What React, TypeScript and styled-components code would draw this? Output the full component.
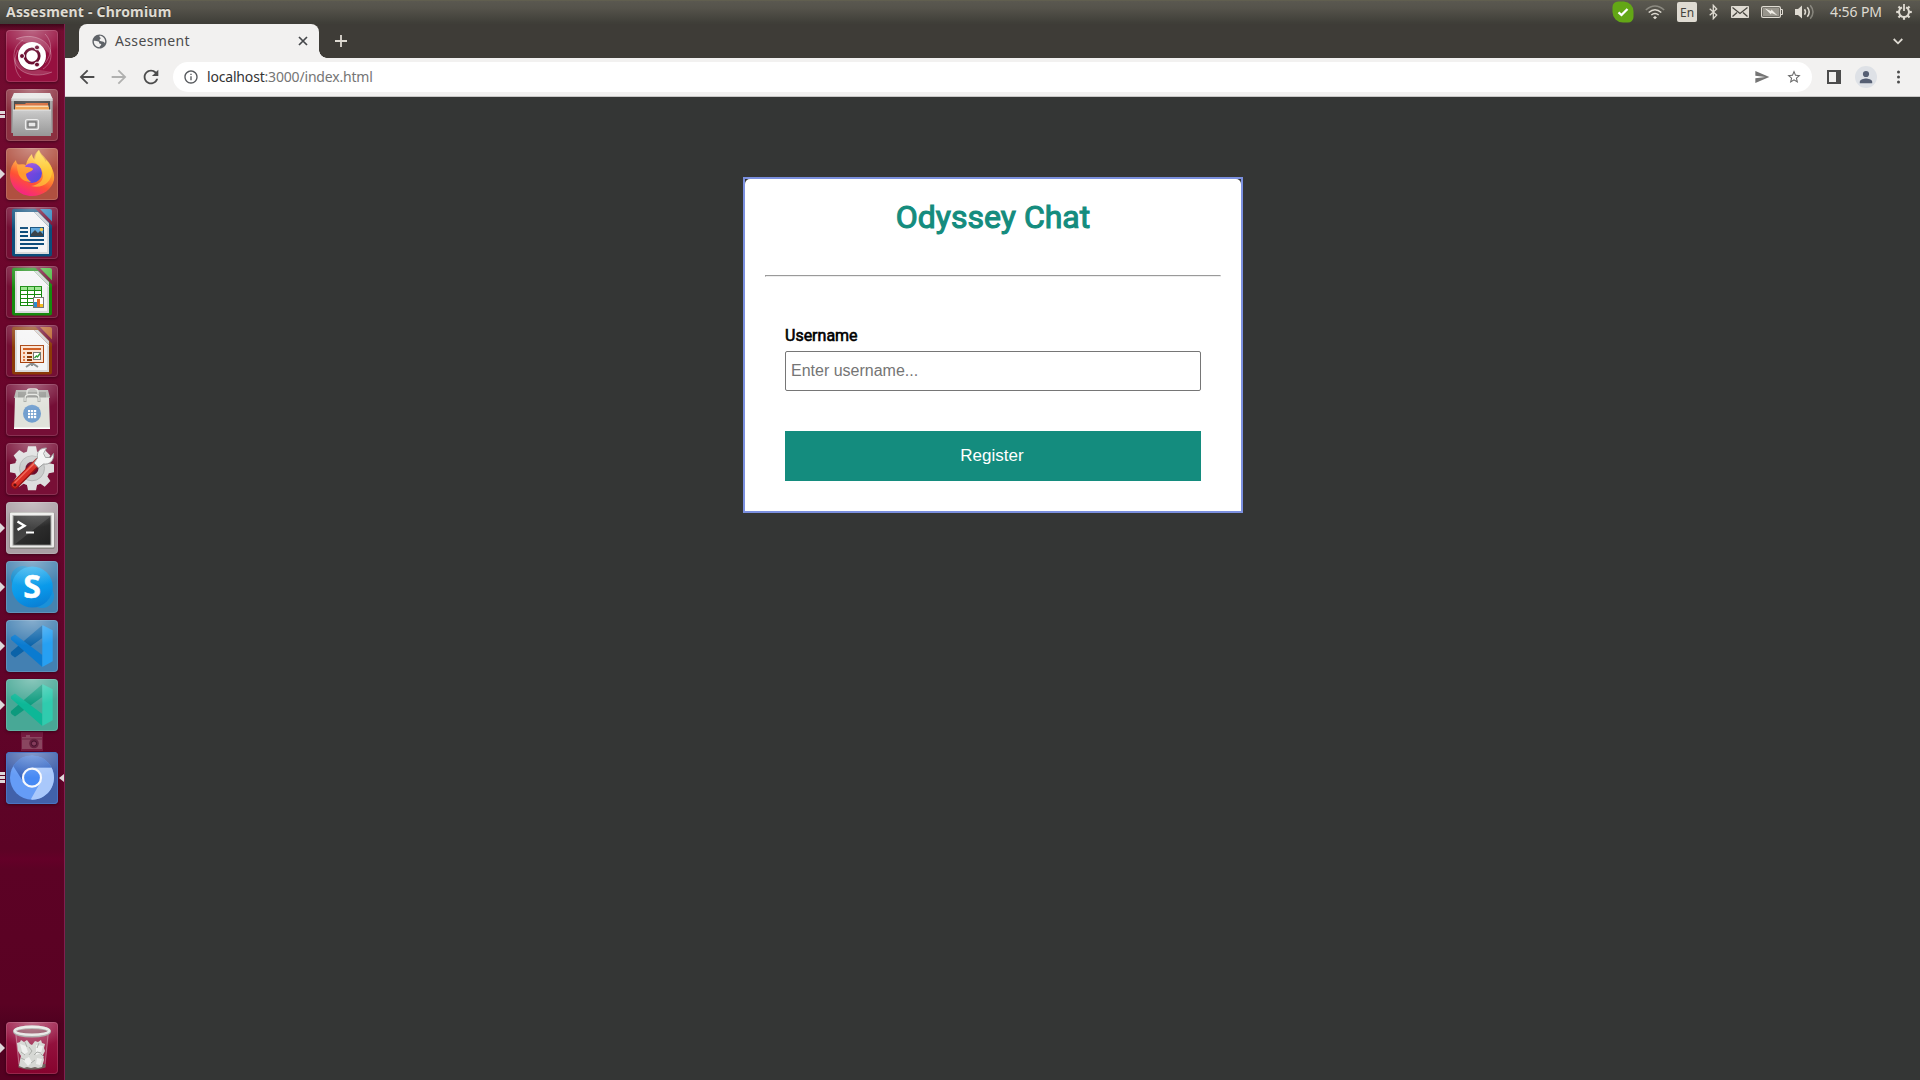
import React from "react";
import styled, { createGlobalStyle } from "styled-components";

const UI = `"Noto Sans", "Open Sans", sans-serif`;

const GlobalStyle = createGlobalStyle`
  *, *::before, *::after { box-sizing: border-box; }
  body { margin: 0; background: #343635; overflow: hidden; }
  svg { display: block; }
`;

const Desktop = styled.div`
  display: flex;
  flex-direction: column;
  width: 1920px;
  height: 1080px;
  background: #343635;
  font-family: ${UI};
`;

/* ---------- top panel ---------- */

const TopPanel = styled.header`
  display: flex;
  align-items: center;
  justify-content: space-between;
  flex: none;
  height: 24px;
  padding: 0 8px 0 6px;
  color: #dfdbd2;
  background: linear-gradient(#68664f 0, #5a5850 1px, #55534b 8px, #3f3e38 23px);
`;

const WindowTitle = styled.div`
  font-size: 14px;
  font-weight: 700;
  line-height: 24px;
  letter-spacing: 0.2px;
  text-shadow: 0 -1px 0 rgba(0, 0, 0, 0.4);
  white-space: nowrap;
`;

const Indicators = styled.div`
  display: flex;
  align-items: center;
  height: 24px;
`;

const Indicator = styled.div<{ $width: number; $gap: number }>`
  flex: none;
  width: ${(p) => p.$width}px;
  margin-left: ${(p) => p.$gap}px;
`;

const Keyboard = styled.div`
  flex: none;
  width: 20px;
  height: 20px;
  margin-left: 12px;
  border-radius: 2px;
  background: #dfdbd2;
  color: #45433d;
  font-size: 12px;
  line-height: 21px;
  text-align: center;
`;

const Clock = styled.div`
  flex: none;
  width: 54px;
  margin-left: 15px;
  font-size: 14px;
  line-height: 20px;
  letter-spacing: -0.1px;
  white-space: nowrap;
`;

/* ---------- launcher ---------- */

const Body = styled.div`
  display: flex;
  flex: 1;
  min-height: 0;
`;

const Launcher = styled.nav`
  display: flex;
  flex-direction: column;
  flex: none;
  width: 65px;
  padding: 6px 0 6px 6px;
  border-right: 1px solid #80204f;
  background:
    linear-gradient(rgba(30, 0, 10, 0.6), transparent 7px),
    linear-gradient(#720c30 0, #6b052b 300px, #61042a 640px, #5c0325 825px, #640028 835px, #5c0225 845px, #5a0223 980px, #500120 1000px, #540121 1056px);
`;

const AppList = styled.div`
  display: flex;
  flex-direction: column;
  gap: 7px;
`;

const Tile = styled.div<{ $tint: string; $edge?: string }>`
  position: relative;
  flex: none;
  width: 52px;
  height: 52px;
  border-radius: 4px;
  background: ${(p) => p.$tint};
  box-shadow: 0 1px 3px rgba(0, 0, 0, 0.4);

  &::after {
    content: "";
    position: absolute;
    inset: 0;
    border-radius: 4px;
    background: radial-gradient(ellipse 38px 26px at 50% 0, rgba(255, 255, 255, 0.36), transparent);
    box-shadow: inset 0 0 0 1px ${(p) => p.$edge ?? "rgba(255,255,255,0.14)"};
  }
`;

const RunningArrow = styled.i`
  position: absolute;
  left: -6px;
  top: 21px;
  border: 5px solid transparent;
  border-left-color: #ded8da;
  border-right-width: 0;
`;

const RunningBars = styled.i<{ $count: number }>`
  position: absolute;
  left: -6px;
  top: 19px;
  width: 5px;
  height: ${(p) => p.$count * 4 - 1}px;
  margin-top: ${(p) => (3 - p.$count) * 2 + 1}px;
  background: repeating-linear-gradient(#ded8da 0 3px, transparent 3px 4px);
`;

const FocusArrow = styled.i`
  position: absolute;
  left: 53px;
  top: 22px;
  border: 4px solid transparent;
  border-right: 5px solid #ded8da;
  border-left-width: 0;
`;

const CameraSlot = styled.div`
  display: flex;
  align-items: center;
  justify-content: center;
  flex: none;
  width: 52px;
  height: 21px;
`;

const Spacer = styled.div`
  flex: 1;
`;

/* ---------- browser ---------- */

const Browser = styled.div`
  display: flex;
  flex-direction: column;
  flex: 1;
  min-width: 0;
`;

const TabStrip = styled.div`
  display: flex;
  flex: none;
  height: 34px;
  padding: 0 12px 0 14px;
  background: #3e3c37;
`;

const Tab = styled.div`
  position: relative;
  display: flex;
  align-items: center;
  width: 240px;
  padding: 0 9px 0 12px;
  border-radius: 8px 8px 0 0;
  background: #f2f1f0;

  &::before,
  &::after {
    content: "";
    position: absolute;
    bottom: 0;
    width: 8px;
    height: 8px;
  }
  &::before {
    left: -8px;
    background: radial-gradient(circle at 0 0, transparent 7.5px, #f2f1f0 8px);
  }
  &::after {
    right: -8px;
    background: radial-gradient(circle at 100% 0, transparent 7.5px, #f2f1f0 8px);
  }
`;

const TabTitle = styled.div`
  flex: 1;
  padding-left: 7px;
  color: #4c4c4c;
  font-size: 14px;
  letter-spacing: 0.35px;
  line-height: 20px;
`;

const NewTab = styled.div`
  display: flex;
  align-items: center;
  justify-content: center;
  width: 28px;
  margin-left: 8px;
`;

const TabSearch = styled.div`
  display: flex;
  align-items: center;
  justify-content: center;
  width: 20px;
  margin-left: auto;
`;

const Toolbar = styled.div`
  display: flex;
  align-items: center;
  gap: 12px;
  flex: none;
  height: 39px;
  padding: 0 12px;
  border-bottom: 1px solid #c8c7c6;
  background: #f2f1f0;
`;

const ToolButton = styled.div`
  display: flex;
  align-items: center;
  justify-content: center;
  flex: none;
  width: 20px;
  height: 20px;

  > svg {
    flex: none;
  }
`;

const Omnibox = styled.div`
  display: flex;
  align-items: center;
  flex: 1;
  height: 30px;
  padding: 0 8px;
  border-radius: 15px;
  background: #fff;
`;

const Url = styled.div`
  flex: 1;
  padding-left: 6px;
  color: #757575;
  font-size: 14px;
  line-height: 20px;
  letter-spacing: -0.18px;

  b {
    color: #333;
    font-weight: 400;
  }
`;

const OmniboxActions = styled.div`
  display: flex;
  gap: 12px;
`;

/* ---------- page ---------- */

const Page = styled.main`
  flex: 1;
  padding-top: 80px;
  background: #343635;
`;

const Frame = styled.section`
  width: 500px;
  margin-left: 678px;
  border: 2px solid #7b90df;
`;

const Card = styled.div`
  height: 332px;
  padding: 19px 20px 20px;
  border-radius: 5px 5px 0 0;
  background: #fff;
  color: #000;
  font-family: Roboto, sans-serif;
`;

const Heading = styled.h1`
  margin: 0;
  color: #148c7e;
  font-size: 32px;
  font-weight: 400;
  line-height: 38px;
  text-align: center;
  -webkit-text-stroke: 1.1px #148c7e;
`;

const Divider = styled.hr`
  margin: 39px 0 0;
`;

const Form = styled.form`
  display: flex;
  flex-direction: column;
  padding: 49px 20px 0;
`;

const Label = styled.label`
  font-size: 16px;
  line-height: 19px;
  -webkit-text-stroke: 0.6px #000;
`;

const Input = styled.input`
  height: 40px;
  margin: 6px 0 40px;
  padding: 0 5px;
  border: 1px solid #767676;
  border-radius: 2px;
  background: #fff;
  font: 16px "Liberation Sans", Arial, sans-serif;
  outline: none;

  &::placeholder {
    color: #757575;
  }
`;

const Submit = styled.button`
  height: 50px;
  padding: 0 2px 0 0;
  border: 0;
  background: #148c7e;
  color: #fff;
  font: 17px "Liberation Sans", Arial, sans-serif;
`;

/* ---------- launcher artwork ---------- */

const Art = ({ children }: { children: React.ReactNode }) => (
  <svg width="52" height="52" viewBox="0 0 52 52">{children}</svg>
);

const DashArt = () => (
  <Art>
    <g fill="none" stroke="#fff" strokeOpacity=".28" strokeWidth="1">
      <path d="M10 9C26 2 45 10 45 25c0 6-3 11-8 14" />
      <path d="M46 42C30 49 8 44 8 26c0-7 3-12 9-16" />
      <path d="M39 4c8 8 7 21 0 29M15 48C8 41 7 29 12 20" />
    </g>
    <path d="M10 9C24 2 44 9 45 25L36 16 18 12zM46 42C30 49 9 44 8 27l9 10 17 3z" fill="#fff" opacity=".15" />
    <circle cx="26" cy="26.5" r="14.5" fill="#3d0018" opacity=".35" />
    <circle cx="26" cy="26" r="14" fill="#fff" />
    <circle cx="26" cy="26" r="7.2" fill="none" stroke="#6b0e31" strokeWidth="2.8" />
    <g fill="#6b0e31" stroke="#fff" strokeWidth="1">
      <circle cx="16" cy="26" r="2.5" />
      <circle cx="31" cy="17.4" r="2.5" />
      <circle cx="31" cy="34.6" r="2.5" />
    </g>
  </Art>
);

const FilesArt = () => (
  <Art>
    <defs>
      <linearGradient id="cab" x1="0" y1="0" x2="0" y2="1"><stop stopColor="#cacaca" /><stop offset="1" stopColor="#979797" /></linearGradient>
    </defs>
    <path d="M8 4h36l2.7 8v32H5.3V12z" fill="#9d9d9d" />
    <path d="M8 4h36l2.7 6H5.3z" fill="#e4e4e4" />
    <path d="M5.3 9.5h41.4V12H5.3z" fill="#c8c8c8" />
    <rect x="8" y="12" width="36" height="10" fill="#3a3a3a" />
    <path d="M9 15h10l1-1h22v7H9z" fill="#d3622e" />
    <rect x="9.5" y="16.5" width="33" height="1.5" fill="#f7d7a8" />
    <rect x="9" y="18" width="34" height="3" fill="#f0a04b" />
    <path d="M7 21h38v26H7z" fill="url(#cab)" />
    <path d="M7 21h38" stroke="#e6e6e6" />
    <rect x="19.5" y="30.5" width="13" height="10" rx="2" fill="#b4b4b4" stroke="#ededed" strokeWidth="1.2" />
    <rect x="22" y="33" width="8" height="5" fill="#e8e8e8" stroke="#6a6a6a" strokeWidth="1.2" />
  </Art>
);

const FirefoxArt = () => (
  <Art>
    <defs>
      <linearGradient id="fxa" x1=".75" y1="0" x2=".3" y2="1"><stop stopColor="#fff04a" /><stop offset=".4" stopColor="#ffa52e" /><stop offset=".68" stopColor="#ff5035" /><stop offset="1" stopColor="#f4208c" /></linearGradient>
      <linearGradient id="fxb" x1="0" y1="0" x2="1" y2="1"><stop stopColor="#a03ae0" /><stop offset="1" stopColor="#4a50dd" /></linearGradient>
    </defs>
    <path d="M33 2c1 5 5 7 7 12 0-1 0-2 0-2 6 6 9 13 8 20-2 9-11 16-22 16C14 48 4 39 4 27c0-6 2-11 6-15 0 2 1 4 3 5 2-1 5-1 7 0 1-5 3-8 6-11 0 2 1 4 3 6 0-4 2-8 4-10z" fill="url(#fxa)" />
    <circle cx="26" cy="25" r="10" fill="url(#fxb)" />
    <path d="M11 17c4-1 7 0 9 2 4 0 7 1 7 2 0 2-5 3-7 5 0 3 2 6 5 8-7 0-12-4-13-10-1-3-1-5-1-7z" fill="#ff9a2f" />
    <path d="M25 9c3 6 11 8 12 17 1 6-4 11-12 12 12 3 21-4 21-15 0-5-3-9-6-12-3-4-6-6-7-9-4 3-5 6-5 10z" fill="#ffd43c" opacity=".65" />
  </Art>
);

const OfficeArt = ({ dark, light, children }: { dark: string; light: string; children: React.ReactNode }) => (
  <Art>
    <path d="M8 1.7h21.5L46 18.5V47q0 2.500-2.500 2.500h-35Q6 49.500 6 47V4q0-2.300 2-2.300z" fill={dark} />
    <path d="M9 5h19L43 20v27H9z" fill="#f4f4f5" />
    <path d="M9 47V5h2v40h30V20l2 1v26z" fill="#d9dadb" />
    <path d="M28 5l15 15V16L32 5z" fill="#cfd1d4" />
    <path d="M34 2h10q2 0 2 2v10.500z" fill={light} />
    {children}
  </Art>
);

const WriterArt = () => (
  <OfficeArt dark="#0b4d7b" light="#2f86bd">
    <g fill="#0e4c7a">
      <rect x="14" y="20" width="8" height="2" />
      <rect x="14" y="24" width="8" height="2" />
      <rect x="14" y="28" width="8" height="2" />
      <rect x="14" y="32" width="24" height="2" />
      <rect x="14" y="36" width="24" height="2" />
      <rect x="14" y="40" width="18" height="2" />
    </g>
    <rect x="24.5" y="20.5" width="13" height="9" fill="#5ea8dc" stroke="#0e4c7a" />
    <circle cx="35.5" cy="22.5" r="1.7" fill="#f6c945" />
    <path d="M25 29v-2l4-4 3 3 2-2 3 3v2z" fill="#39424a" />
  </OfficeArt>
);

const CalcArt = () => (
  <OfficeArt dark="#168a0e" light="#4ab93f">
    <rect x="14.5" y="20.5" width="21" height="19" fill="#fff" stroke="#168a0e" />
    <path d="M15 21h20v3H15z" fill="#9be58e" />
    <path d="M15 24.5h20M15 28.5h20M15 32.5h20M15 36.5h20M21.5 21v18M28.5 21v18" stroke="#168a0e" />
    <rect x="27.5" y="31.5" width="10" height="10" fill="#fff" stroke="#777" />
    <rect x="28" y="36" width="3" height="5" fill="#2d8bd0" />
    <rect x="31" y="33" width="3" height="8" fill="#e06a25" />
    <rect x="34" y="38" width="3" height="3" fill="#f1bd21" />
  </OfficeArt>
);

const ImpressArt = () => (
  <OfficeArt dark="#8b3a08" light="#b9642c">
    <path d="M26 38l-6 4M26 38l6 4M26 38v3" stroke="#8a8f91" strokeWidth="2" />
    <rect x="14.5" y="20.5" width="23" height="17" fill="#fbe3d2" stroke="#a8420f" />
    <rect x="17" y="23" width="18" height="2" fill="#cf5c20" />
    <g fill="#8b3a08">
      <rect x="21" y="27" width="5" height="2" />
      <rect x="21" y="31" width="5" height="2" />
      <rect x="21" y="34" width="5" height="2" />
    </g>
    <g fill="#df7b45">
      <rect x="17" y="27" width="2" height="2" />
      <rect x="17" y="31" width="2" height="2" />
      <rect x="17" y="34" width="2" height="2" />
    </g>
    <rect x="27.5" y="27.5" width="7" height="7" fill="#fff" stroke="#777" />
    <path d="M28.5 33l2-2 1 1 2.5-3.5" fill="none" stroke="#2e9a35" strokeWidth="1.3" />
  </OfficeArt>
);

const SoftwareArt = () => (
  <Art>
    <path d="M10 6h32l2 8H8z" fill="#aeb0ab" />
    <path d="M12 8h28v6H12z" fill="#8f918c" />
    <path d="M21 13V8q0-3 3-3h5q3 0 3 3v5" fill="none" stroke="#d5d7d2" strokeWidth="1.6" />
    <path d="M9 13.5h34L44 45H8z" fill="#e0e2db" />
    <path d="M8 44.3h36" stroke="#fff" strokeWidth="1.4" />
    <path d="M19 18v-3q0-4 4-4h6q4 0 4 4v3" fill="none" stroke="#7e807c" strokeWidth="2.6" />
    <path d="M19 17.5v-3q0-4 4-4h6q4 0 4 4v3" fill="none" stroke="#e2e4de" strokeWidth="1.5" />
    <circle cx="26" cy="29.7" r="9" fill="#729fcf" />
    <g fill="#fff">
      {[22, 25, 28].map((x) => [26, 29, 32].map((y) => <rect key={`${x}-${y}`} x={x} y={y} width="2.2" height="2.2" />))}
    </g>
  </Art>
);

const SettingsArt = () => (
  <Art>
    <g transform="translate(26 25.3)">
      <g fill="#dddede">
        {[0, 45, 90, 135].map((a) => <path key={a} transform={`rotate(${a})`} d="M-5-17l1-5h8l1 5v34l-1 5h-8l-1-5z" />)}
      </g>
      <circle r="17.5" fill="#dddede" />
      <circle r="12.5" fill="#cbcdcd" stroke="#b3b5b5" />
      <circle r="6.5" fill="#6a0c2d" />
    </g>
    <path d="M9 42L32 19" stroke="#981313" strokeWidth="8" strokeLinecap="round" />
    <path d="M9 41.500L31.500 19" stroke="#d92f26" strokeWidth="6" strokeLinecap="round" />
    <path d="M9 39.500L29 19.500" stroke="#f0695a" strokeWidth="1.5" strokeLinecap="round" />
    <circle cx="9" cy="42" r="1.6" fill="#591012" />
    <path d="M28 20l3.500-5c-1-6 2-10 9-10l-3 5.500 2 4 5 0 3-4c1 7-4 11.500-10 10.500l-5 4z" fill="#f2f3f3" stroke="#8f9292" strokeWidth=".9" />
  </Art>
);

const TerminalArt = () => (
  <Art>
    <defs>
      <linearGradient id="scr" x1="0" y1="0" x2="1" y2="1"><stop stopColor="#383838" /><stop offset=".5" stopColor="#444" /><stop offset=".52" stopColor="#2d2d2d" /><stop offset="1" stopColor="#202020" /></linearGradient>
    </defs>
    <rect x="3.5" y="10" width="45" height="37" rx="1.5" fill="#86827f" />
    <rect x="4" y="10.5" width="44" height="35" rx="1" fill="#ececea" />
    <rect x="6.5" y="13" width="39" height="30.7" fill="#a5a5a3" />
    <rect x="7.5" y="14" width="37" height="28.7" fill="url(#scr)" />
    <path d="M11.5 19.500l7 4.200-7 4.200" fill="none" stroke="#fff" strokeWidth="2.4" />
    <path d="M20 30.500h8" stroke="#fff" strokeWidth="2" />
  </Art>
);

const SkypeLetter = styled.text`
  font: 700 32px "Open Sans", sans-serif;
`;

const SkypeArt = () => (
  <Art>
    <defs>
      <linearGradient id="sk" x1=".3" y1="0" x2=".6" y2="1"><stop stopColor="#1fabec" /><stop offset=".6" stopColor="#0999ea" /><stop offset="1" stopColor="#0a7fd4" /></linearGradient>
    </defs>
    <circle cx="17" cy="17" r="12" fill="#168dcd" />
    <circle cx="36" cy="35" r="12" fill="#1b91d8" />
    <circle cx="26.3" cy="26" r="20.5" fill="url(#sk)" />
    <SkypeLetter x="26" y="37.300" textAnchor="middle" fill="#fff" stroke="#fff" strokeWidth=".5">S</SkypeLetter>
  </Art>
);

const CodeArt = ({ back, band, slab }: { back: string; band: string; slab: string }) => (
  <Art>
    <path d="M5 32q-.6 2 .5 3l3.500 2.500L36.300 18V5.300z" fill={back} />
    <path d="M5 19.500q-.6-2 .5-2.800l3.500-2.200L36.300 35v12z" fill={band} />
    <path d="M36.300 5l10.400 5.300v30.900L36.300 47z" fill={slab} />
  </Art>
);

const ChromiumArt = () => (
  <Art>
    <defs>
      <linearGradient id="crt" x1="0" y1="0" x2="0" y2="1"><stop stopColor="#4175d0" /><stop offset="1" stopColor="#3560b8" /></linearGradient>
    </defs>
    <circle cx="26" cy="25.7" r="22" fill="#659cf6" />
    <path d="M7.200 14A22 22 0 0 1 45.600 15.700L26 15.700 17.500 30z" fill="url(#crt)" />
    <path d="M45.600 15.700A22 22 0 0 1 26 47.700L25 47l9-16-8-15.300z" fill="#a9c8fb" />
    <circle cx="26" cy="25.7" r="9" fill="#4689f4" stroke="#f6f8fc" strokeWidth="2.2" />
  </Art>
);

const TrashArt = () => (
  <Art>
    <path d="M9 11h34l-3.500 34q-13.500 4-27 0z" fill="#f3c8d4" opacity=".16" />
    <path d="M12.500 42v3.500q13.500 4.500 27 0V42z" fill="#71645f" />
    <path d="M11 21l3-1 1-2 3 2 3-2 3 4 2 1 3-4 3 1 3-2 1 3 3 1-1 4 1 3-2 4 1 5-2 7-4 1-3-1-4 1-4-1-3 1-5-2 1-6 1-4-3-5z" fill="#d6d8d4" />
    <path d="M14 22l6 2 2 6-5 3zM30 23l7 1-2 7-5 2zM17 38l6-3 3 5-4 4zM31 36l5 1-2 6-4-1z" fill="#eff0ee" />
    <path d="M23 25l3 4-3 4M28 33l3-3 4 1M15 36l4 2M25 41l4-3M19 20l2 5M33 21l-2 5M15 30l4 3M35 32l3 3" stroke="#aaada9" fill="none" />
    <path d="M10 13l3 29M42 13l-3 29" stroke="#fff" opacity=".3" />
    <ellipse cx="26" cy="9.500" rx="17.300" ry="4.300" fill="#8f4a5d" stroke="#a2a3a0" strokeWidth="3.400" />
    <ellipse cx="26" cy="8.800" rx="17.300" ry="4" fill="none" stroke="#e4e5e2" strokeWidth="2.400" />
  </Art>
);

const CameraArt = () => (
  <svg width="22" height="19" viewBox="0 0 22 19">
    <rect width="22" height="19" fill="#8b3157" opacity=".5" />
    <path d="M1 5h4V3h4v2h12v12H1z" fill="#8a4660" />
    <path d="M1 7h20" stroke="#6d2443" />
    <circle cx="13" cy="11.5" r="4.8" fill="#65213f" />
    <circle cx="13" cy="11.5" r="2.6" fill="#853c5c" stroke="#42102a" />
  </svg>
);

/* ---------- small icons ---------- */

const Glyph = ({ size, color, d }: { size: number; color: string; d: string }) => (
  <svg width={size} height={size} viewBox="0 0 24 24" fill={color}><path d={d} /></svg>
);

const BACK = "M20 11H7.830l5.590-5.590L12 4l-8 8 8 8 1.410-1.410L7.830 13H20v-2z";
const FORWARD = "M4 11h12.170l-5.590-5.590L12 4l8 8-8 8-1.410-1.410L16.170 13H4v-2z";
const RELOAD = "M17.650 6.350C16.200 4.900 14.210 4 12 4c-4.420 0-7.990 3.580-7.990 8s3.570 8 7.990 8c3.730 0 6.840-2.550 7.730-6h-2.080c-.82 2.330-3.040 4-5.650 4-3.310 0-6-2.690-6-6s2.690-6 6-6c1.660 0 3.140.69 4.220 1.780L13 11h7V4l-2.350 2.350z";
const GLOBE = "M12 2C6.480 2 2 6.480 2 12s4.480 10 10 10 10-4.480 10-10S17.520 2 12 2zM4 12c0-.4 0-.8.1-1.200C6 11.500 8.500 11 10.500 12c1.500.8.5 2.500 2 3 1.500.4 2 0 2 1.200 0 1.200-2 1.800-2.500 3.800C7.600 20 4 16.400 4 12zm15.500 2.500c-.5-1.500-1.500-2.500-3.500-2.500-2.500 0-4-.5-4-2s2-1.500 1.500-3c-.4-1-1.500-1-1.500-2.500 0-.2 0-.3.1-.5C16.500 4 20 7.600 20 12c0 .9-.2 1.700-.5 2.500z";
const INFO = "M11 17h2v-6h-2v6zm1-15C6.480 2 2 6.480 2 12s4.480 10 10 10 10-4.480 10-10S17.520 2 12 2zm0 18c-4.410 0-8-3.590-8-8s3.590-8 8-8 8 3.590 8 8-3.590 8-8 8zM11 9h2V7h-2v2z";
const SEND = "M2.010 21L23 12 2.010 3 2 10l15 2-15 2z";
const STAR = "M22 9.240l-7.190-.62L12 2 9.190 8.630 2 9.240l5.460 4.730L5.820 21 12 17.270 18.180 21l-1.630-7.030L22 9.240zM12 15.400l-3.760 2.270 1-4.280-3.320-2.880 4.380-.38L12 6.100l1.710 4.040 4.380.38-3.320 2.880 1 4.280L12 15.400z";

const StatusArea = () => (
  <Indicators>
    <Indicator $width={22} $gap={0}>
      <svg width="22" height="22" viewBox="0 0 22 22">
        <path d="M6 .5h6A10 10 0 0 1 21.500 11v5a5.500 5.500 0 0 1-5.500 5.500h-5A10.500 10.500 0 0 1 .5 11V6A5.500 5.500 0 0 1 6 .5z" fill="#63a716" />
        <path d="M6.500 11.300l3 2.700 6-6" fill="none" stroke="#fff" strokeWidth="2.300" />
      </svg>
    </Indicator>
    <Indicator $width={20} $gap={11}>
      <svg width="20" height="16" viewBox="0 0 20 16" fill="none" stroke="#dfdbd2" strokeWidth="1.500">
        <path d="M.8 6q9.200-8 18.400 0" opacity=".4" />
        <path d="M3.700 8.500q6.300-5.500 12.600 0M6.300 11q3.700-3 7.400 0" />
        <path d="M10 12l2 1.500-2 1.700-2-1.700z" fill="#dfdbd2" stroke="none" />
      </svg>
    </Indicator>
    <Keyboard>En</Keyboard>
    <Indicator $width={9} $gap={12}>
      <svg width="9" height="16" viewBox="0 0 9 16" fill="none" stroke="#dfdbd2" strokeWidth="1.300">
        <path d="M.7 4.700l7 6.300-3.400 3.700V1.300L7.700 5l-7 6.300" />
      </svg>
    </Indicator>
    <Indicator $width={18} $gap={13}>
      <svg width="18" height="12" viewBox="0 0 18 12">
        <rect width="18" height="12" rx=".8" fill="#dfdbd2" />
        <path d="M1.500 1.500L9 7.500l7.500-6M1.500 10.500l4.500-4M16.500 10.500l-4.500-4" fill="none" stroke="#47453f" strokeWidth="1.300" />
      </svg>
    </Indicator>
    <Indicator $width={22} $gap={12}>
      <svg width="22" height="12" viewBox="0 0 22 12">
        <rect x=".6" y=".6" width="18.8" height="10.8" rx="1.5" fill="none" stroke="#dfdbd2" strokeWidth="1.2" />
        <rect x="2" y="2" width="16" height="8" fill="#98958c" />
        <path d="M4 2.500l6 2.600.5-1.700 6 6.100-6-2.600-.5 1.700z" fill="#efece5" />
        <path d="M20 3.500h1.500v5H20" fill="none" stroke="#dfdbd2" />
      </svg>
    </Indicator>
    <Indicator $width={20} $gap={12}>
      <svg width="20" height="16" viewBox="0 0 20 16" fill="none" stroke="#dfdbd2" strokeWidth="1.500">
        <path d="M0 5h3l4-3.500v13L3 11H0z" fill="#dfdbd2" stroke="none" />
        <path d="M9.500 5.300q2 2.700 0 5.400M12.300 3.300q3.800 4.700 0 9.400" />
        <path d="M15.200 1.300q5.600 6.700 0 13.400" opacity=".4" />
      </svg>
    </Indicator>
    <Clock>4:56 PM</Clock>
    <Indicator $width={16} $gap={12}>
      <svg width="16" height="16" viewBox="-8 -8 16 16">
        <path d="M-2-4.600A5 5 0 1 0 2-4.600" fill="none" stroke="#dfdbd2" strokeWidth="2" />
        <g stroke="#dfdbd2" strokeWidth="2.200">
          {[45, 90, 135, 180, 225, 270, 315].map((a) => <path key={a} transform={`rotate(${a})`} d="M0-5v-2.800" />)}
        </g>
        <path d="M0-8v7" stroke="#dfdbd2" strokeWidth="1.800" />
      </svg>
    </Indicator>
  </Indicators>
);

export default function App() {
  return (
    <>
      <GlobalStyle />
      <Desktop>
        <TopPanel>
          <WindowTitle>Assesment - Chromium</WindowTitle>
          <StatusArea />
        </TopPanel>
        <Body>
          <Launcher>
            <AppList>
              <Tile $tint="#96103f"><DashArt /></Tile>
              <Tile $tint="#8b3040"><FilesArt /><RunningBars $count={2} /></Tile>
              <Tile $tint="#b05040"><FirefoxArt /><RunningArrow /></Tile>
              <Tile $tint="#740f34"><WriterArt /></Tile>
              <Tile $tint="#740f34"><CalcArt /></Tile>
              <Tile $tint="#740f34"><ImpressArt /></Tile>
              <Tile $tint="#750e36"><SoftwareArt /></Tile>
              <Tile $tint="#780f36"><SettingsArt /></Tile>
              <Tile $tint="#a99da3"><TerminalArt /><RunningArrow /></Tile>
              <Tile $tint="#4683b0"><SkypeArt /><RunningArrow /></Tile>
              <Tile $tint="#4380b2"><CodeArt back="#0b63a8" band="#0a7bd0" slab="#27a0f2" /><RunningArrow /></Tile>
              <Tile $tint="#48a896"><CodeArt back="#0c9a7d" band="#0db797" slab="#30cbae" /><RunningArrow /></Tile>
            </AppList>
            <CameraSlot><CameraArt /></CameraSlot>
            <Tile $tint="#4161aa" $edge="#4a74c2"><ChromiumArt /><RunningBars $count={3} /><FocusArrow /></Tile>
            <Spacer />
            <Tile $tint="linear-gradient(#9c1a48, #86032e)"><TrashArt /><RunningArrow /></Tile>
          </Launcher>
          <Browser>
            <TabStrip>
              <Tab>
                <Glyph size={17} color="#5f6368" d={GLOBE} />
                <TabTitle>Assesment</TabTitle>
                <svg width="14" height="14" viewBox="0 0 14 14" stroke="#45474a" strokeWidth="1.700"><path d="M3 3l8 8M11 3l-8 8" /></svg>
              </Tab>
              <NewTab>
                <svg width="12" height="12" viewBox="0 0 12 12" stroke="#dedad2" strokeWidth="1.800"><path d="M0 6h12M6 0v12" /></svg>
              </NewTab>
              <TabSearch>
                <svg width="10" height="7" viewBox="0 0 10 7" fill="none" stroke="#dedad2" strokeWidth="1.800"><path d="M.7 1L5 5.300 9.300 1" /></svg>
              </TabSearch>
            </TabStrip>
            <Toolbar>
              <ToolButton><Glyph size={22} color="#4c4c4c" d={BACK} /></ToolButton>
              <ToolButton><Glyph size={22} color="#b0b0af" d={FORWARD} /></ToolButton>
              <ToolButton><Glyph size={22} color="#4c4c4c" d={RELOAD} /></ToolButton>
              <Omnibox>
                <ToolButton><Glyph size={16} color="#55585c" d={INFO} /></ToolButton>
                <Url><b>localhost</b>:3000/index.html</Url>
                <OmniboxActions>
                  <ToolButton><Glyph size={16} color="#757575" d={SEND} /></ToolButton>
                  <ToolButton><Glyph size={16} color="#6a6a6a" d={STAR} /></ToolButton>
                </OmniboxActions>
              </Omnibox>
              <ToolButton>
                <svg width="14" height="14" viewBox="0 0 14 14"><path d="M0 0h14v14H0zM2 2v10h7V2z" fillRule="evenodd" fill="#4c4c4c" /></svg>
              </ToolButton>
              <ToolButton>
                <svg width="22" height="22" viewBox="0 0 22 22">
                  <circle cx="11" cy="11" r="11" fill="#dee1e6" />
                  <circle cx="11" cy="8" r="3.1" fill="#565f73" />
                  <path d="M4.800 17.200v-1.500c0-2.200 4.200-3.200 6.200-3.200s6.200 1 6.200 3.200v1.500z" fill="#565f73" />
                </svg>
              </ToolButton>
              <ToolButton>
                <svg width="4" height="14" viewBox="0 0 4 14" fill="#4c4c4c"><circle cx="2.5" cy="2" r="1.5" /><circle cx="2.5" cy="7" r="1.5" /><circle cx="2.5" cy="12" r="1.5" /></svg>
              </ToolButton>
            </Toolbar>
            <Page>
              <Frame>
                <Card>
                  <Heading>Odyssey Chat</Heading>
                  <Divider />
                  <Form>
                    <Label htmlFor="username">Username</Label>
                    <Input id="username" placeholder="Enter username..." />
                    <Submit type="button">Register</Submit>
                  </Form>
                </Card>
              </Frame>
            </Page>
          </Browser>
        </Body>
      </Desktop>
    </>
  );
}
